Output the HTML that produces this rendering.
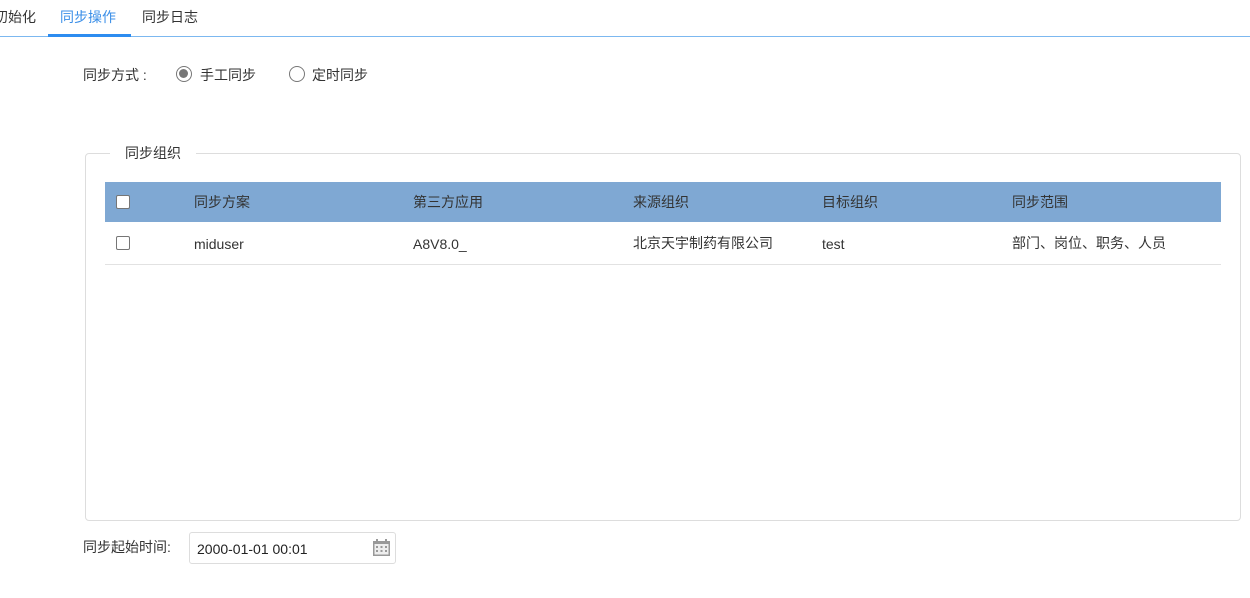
<!DOCTYPE html>
<html><head><meta charset="utf-8"><style>
body{margin:0;width:1250px;height:598px;background:#fff;font-family:"Liberation Sans","Noto Sans CJK SC",sans-serif;font-size:14px;color:#333;position:relative;overflow:hidden}
.a{position:absolute;white-space:nowrap}
.cb{position:absolute;width:12px;height:12px;border:1px solid #767676;border-radius:2px;background:#fff}
</style></head><body>
<div class="a" style="left:0;top:36px;width:1250px;height:1px;background:#7cb8f0"></div>
<div class="a" style="left:-6px;top:7px">初始化</div>
<div class="a" style="left:60px;top:7px;color:#3b8fe8">同步操作</div>
<div class="a" style="left:48px;top:34px;width:83px;height:3px;background:#2d8cf0"></div>
<div class="a" style="left:142px;top:7px">同步日志</div>
<div class="a" style="left:83px;top:65px">同步方式 :</div>
<div class="a" style="left:176px;top:66px;width:14px;height:14px;border:1px solid #777;border-radius:50%"></div>
<div class="a" style="left:179px;top:69px;width:9px;height:9px;background:#777;border-radius:50%"></div>
<div class="a" style="left:200px;top:65px">手工同步</div>
<div class="a" style="left:289px;top:66px;width:14px;height:14px;border:1px solid #777;border-radius:50%"></div>
<div class="a" style="left:312px;top:65px">定时同步</div>
<div class="a" style="left:85px;top:153px;width:1154px;height:366px;border:1px solid #ddd;border-radius:4px"></div>
<div class="a" style="left:110px;top:143px;padding:0 15px;background:#fff">同步组织</div>
<div class="a" style="left:105px;top:182px;width:1116px;height:40px;background:#7fa8d3"></div>
<div class="a" style="left:105px;top:264px;width:1116px;height:1px;background:#e2e2e2"></div>
<div class="cb" style="left:116px;top:195px"></div>
<div class="cb" style="left:116px;top:236px"></div>
<div class="a" style="left:194px;top:192px">同步方案</div>
<div class="a" style="left:413px;top:192px">第三方应用</div>
<div class="a" style="left:633px;top:192px">来源组织</div>
<div class="a" style="left:822px;top:192px">目标组织</div>
<div class="a" style="left:1012px;top:192px">同步范围</div>
<div class="a" style="left:194px;top:236px">miduser</div>
<div class="a" style="left:413px;top:236px">A8V8.0_</div>
<div class="a" style="left:633px;top:233px">北京天宇制药有限公司</div>
<div class="a" style="left:822px;top:236px">test</div>
<div class="a" style="left:1012px;top:233px">部门、岗位、职务、人员</div>
<div class="a" style="left:83px;top:537px">同步起始时间:</div>
<div class="a" style="left:189px;top:532px;width:205px;height:30px;border:1px solid #ddd;border-radius:3px"></div>
<div class="a" style="left:197px;top:541px;color:#222">2000-01-01 00:01</div>
<svg class="a" style="left:372px;top:538px" width="19" height="19" viewBox="0 0 19 19"><rect x="1" y="3" width="17" height="15" fill="#999"/><rect x="2.5" y="6" width="14" height="10.5" fill="#eee"/><g fill="#999"><rect x="4" y="1" width="2" height="4"/><rect x="13" y="1" width="2" height="4"/><rect x="4" y="8" width="2" height="2"/><rect x="8.5" y="8" width="2" height="2"/><rect x="13" y="8" width="2" height="2"/><rect x="4" y="12" width="2" height="2"/><rect x="8.5" y="12" width="2" height="2"/><rect x="13" y="12" width="2" height="2"/></g></svg>
</body></html>
